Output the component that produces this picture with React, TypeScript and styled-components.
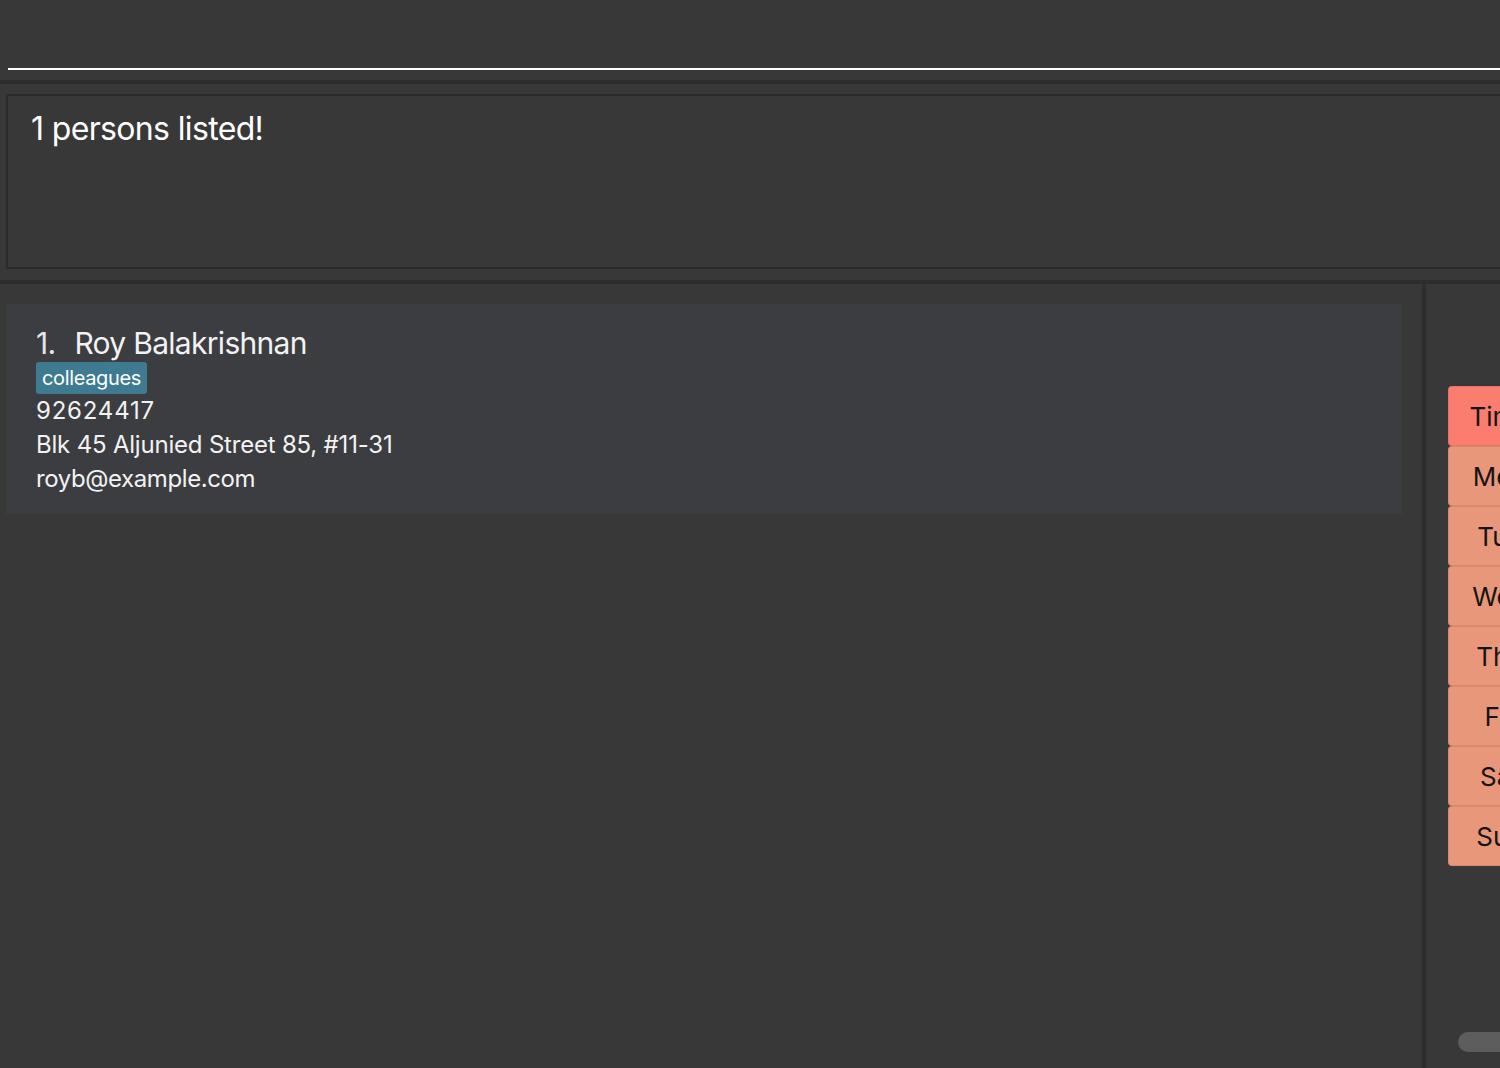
import React from "react";
import styled, { createGlobalStyle } from "styled-components";

const GlobalStyle = createGlobalStyle`
  html, body {
    margin: 0;
    padding: 0;
    background: #383838;
    overflow: hidden;
  }
  body {
    font-family: Inter, "Noto Sans", sans-serif;
  }
`;

const Window = styled.div`
  width: 1620px;
  height: 1068px;
  background: #383838;
  display: flex;
  flex-direction: column;
`;

const CommandArea = styled.div`
  height: 80px;
  padding: 0 0 0 8px;
  display: flex;
  align-items: flex-end;
`;

const CommandInput = styled.input`
  width: 100%;
  height: 40px;
  margin-bottom: 10px;
  background: transparent;
  border: none;
  border-bottom: 2px solid #ffffff;
  outline: none;
  color: #ffffff;
  font-family: Inter, sans-serif;
  font-size: 24px;
  padding: 0;
  box-sizing: border-box;
`;

const HSplit = styled.div`
  height: 4px;
  background: #2d2d2d;
  flex-shrink: 0;
`;

const ResultArea = styled.div`
  height: 196px;
  padding: 10px 0 11px 6px;
  box-sizing: border-box;
  display: flex;
`;

const ResultBox = styled.div`
  flex: 1;
  border: 2px solid #2b2b2b;
  padding: 13px 0 0 23px;
  color: #ffffff;
  font-size: 32px;
  letter-spacing: -0.65px;
`;

const Body = styled.div`
  flex: 1;
  display: flex;
  min-height: 0;
`;

const ListPane = styled.div`
  width: 1422px;
  padding: 20px 20px 0 6px;
  box-sizing: border-box;
`;

const VSplit = styled.div`
  width: 4px;
  background: #2d2d2d;
  flex-shrink: 0;
`;

const Card = styled.div`
  background: #3c3d40;
  height: 210px;
  padding: 20px 0 0 30px;
  box-sizing: border-box;
  color: #f2f2f2;
  display: flex;
  flex-direction: column;
  align-items: flex-start;
`;

const NameRow = styled.div`
  font-size: 30px;
  letter-spacing: -0.7px;
  line-height: 38px;
  display: flex;
  gap: 19px;
`;

const Index = styled.span`
  color: #e6e6e6;
`;

const Tag = styled.span`
  background: #3e7b91;
  color: #ffffff;
  border-radius: 3px;
  font-size: 20px;
  letter-spacing: -0.35px;
  line-height: 32px;
  padding: 0 6px;
`;

const Field = styled.div<{ $spacing?: number }>`
  font-size: 24px;
  line-height: 34px;
  letter-spacing: ${(p) => p.$spacing ?? -0.2}px;
`;

const SchedulePane = styled.div`
  flex: 1;
  padding: 102px 0 0 22px;
  display: flex;
  flex-direction: column;
  position: relative;
`;

const DayButton = styled.div<{ $active?: boolean }>`
  width: 104px;
  height: 60px;
  box-sizing: border-box;
  border-radius: 4px;
  border: 1px solid rgba(0, 0, 0, 0.08);
  background: ${(p) => (p.$active ? "#fa7d70" : "#e9977b")};
  color: #141414;
  font-size: 26px;
  display: flex;
  align-items: center;
  justify-content: center;
`;

const ScrollThumb = styled.div`
  position: absolute;
  left: 32px;
  bottom: 16px;
  width: 200px;
  height: 20px;
  border-radius: 10px;
  background: #5d5d5d;
`;

const days = ["Time", "Mon", "Tue", "Wed", "Thu", "Fri", "Sat", "Sun"];

export default function App() {
  return (
    <>
      <GlobalStyle />
      <Window>
        <CommandArea>
          <CommandInput />
        </CommandArea>
        <HSplit />
        <ResultArea>
          <ResultBox>1 persons listed!</ResultBox>
        </ResultArea>
        <HSplit />
        <Body>
          <ListPane>
            <Card>
              <NameRow>
                <Index>1.</Index>
                <span>Roy Balakrishnan</span>
              </NameRow>
              <Tag>colleagues</Tag>
              <Field $spacing={0.8}>92624417</Field>
              <Field>Blk 45 Aljunied Street 85, #11-31</Field>
              <Field $spacing={-0.4}>royb@example.com</Field>
            </Card>
          </ListPane>
          <VSplit />
          <SchedulePane>
            {days.map((d, i) => (
              <DayButton key={d} $active={i === 0}>
                {d}
              </DayButton>
            ))}
            <ScrollThumb />
          </SchedulePane>
        </Body>
      </Window>
    </>
  );
}
